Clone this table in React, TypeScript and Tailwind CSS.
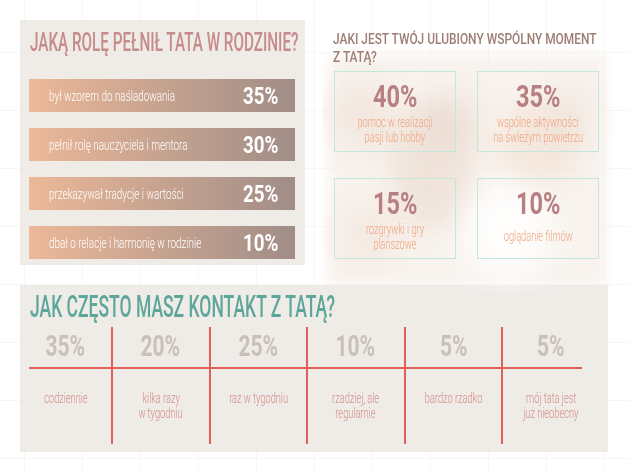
import React from "react";

const bars = [
  { label: "był wzorem do naśladowania", pct: "35%" },
  { label: "pełnił rolę nauczyciela i mentora", pct: "30%" },
  { label: "przekazywał tradycje i wartości", pct: "25%" },
  { label: "dbał o relacje i harmonię w rodzinie", pct: "10%" },
];

const moments = [
  { pct: "40%", lines: ["pomoc w realizacji", "pasji lub hobby"] },
  { pct: "35%", lines: ["wspólne aktywności", "na świeżym powietrzu"] },
  { pct: "15%", lines: ["rozgrywki i gry", "planszowe"] },
  { pct: "10%", lines: ["oglądanie filmów"] },
];

const freq = [
  { pct: "35%", lines: ["codziennie"] },
  { pct: "20%", lines: ["kilka razy", "w tygodniu"] },
  { pct: "25%", lines: ["raz w tygodniu"] },
  { pct: "10%", lines: ["rzadziej, ale", "regularnie"] },
  { pct: "5%", lines: ["bardzo rzadko"] },
  { pct: "5%", lines: ["mój tata jest", "już nieobecny"] },
];

function LeftPanel() {
  return (
    <div className="w-[285px] h-[245px] bg-[#efebe7] pt-[10px]">
      <div className="pl-[10px] h-[25px] text-[25px] leading-[25px] font-medium text-[#c68b8b]">
        <span className="inline-block whitespace-nowrap origin-left scale-x-[0.61]">
          JAKĄ ROLĘ PEŁNIŁ TATA W RODZINIE?
        </span>
      </div>
      <div className="mt-[24px] ml-[9px] w-[266px] flex flex-col gap-[16px]">
        {bars.map((b) => (
          <div
            key={b.label}
            className="h-[33px] flex items-center pl-[20px] pr-[17px] bg-[linear-gradient(to_right,#ecb898,#a08d87)]"
          >
            <div className="flex-1 min-w-0">
              <span className="inline-block whitespace-nowrap origin-left scale-x-[0.66] text-[15px] font-light text-white">
                {b.label}
              </span>
            </div>
            <span className="shrink-0 inline-block whitespace-nowrap origin-right scale-x-[0.78] text-[24px] leading-[24px] font-bold text-white">
              {b.pct}
            </span>
          </div>
        ))}
      </div>
    </div>
  );
}

function Photo() {
  return (
    <svg
      className="absolute left-[-3px] top-[25px]"
      width="292"
      height="248"
      viewBox="0 0 292 248"
    >
      <defs>
        <filter id="bl" x="-50%" y="-50%" width="200%" height="200%">
          <feGaussianBlur stdDeviation="14" />
        </filter>
        <filter id="bl2" x="-50%" y="-50%" width="200%" height="200%">
          <feGaussianBlur stdDeviation="6" />
        </filter>
      </defs>
      <rect x="6" y="10" width="278" height="230" fill="#f6eee7" opacity="0.7" filter="url(#bl2)" />
      <g filter="url(#bl)">
        <ellipse cx="40" cy="70" rx="35" ry="40" fill="#ecdcd0" opacity="0.45" />
        <ellipse cx="110" cy="120" rx="42" ry="65" fill="#e9d7cb" opacity="0.55" />
        <ellipse cx="130" cy="75" rx="30" ry="30" fill="#e6d6cc" opacity="0.45" />
        <ellipse cx="215" cy="100" rx="40" ry="45" fill="#f1dccc" opacity="0.5" />
        <ellipse cx="250" cy="75" rx="22" ry="40" fill="#ecdcd1" opacity="0.4" />
        <ellipse cx="185" cy="185" rx="45" ry="50" fill="#ffffff" opacity="0.85" />
        <ellipse cx="45" cy="190" rx="35" ry="35" fill="#f2e4da" opacity="0.5" />
      </g>
    </svg>
  );
}

function RightPanel() {
  return (
    <div className="relative ml-[20px] w-[287px] h-[245px] pl-[8px] pt-[10px]">
      <Photo />
      <div className="relative text-[15px] leading-[18px] font-medium text-[#9d7d74]">
        <span className="block whitespace-nowrap origin-left scale-x-[0.795]">
          JAKI JEST TWÓJ ULUBIONY WSPÓLNY MOMENT
        </span>
        <span className="block whitespace-nowrap origin-left scale-x-[0.795]">Z TATĄ?</span>
      </div>
      <div className="relative mt-[5px] ml-[1px] grid grid-cols-[122px_122px] gap-x-[21px] gap-y-[26px]">
        {moments.map((m) => (
          <div
            key={m.pct}
            className="h-[81px] border border-[#c4e6dd] flex flex-col items-center pt-[9px]"
          >
            <span className="inline-block whitespace-nowrap origin-center scale-x-[0.76] text-[31px] leading-[31px] font-bold text-[#b77f82]">
              {m.pct}
            </span>
            <div className="flex-1 flex flex-col items-center justify-center pb-[4px]">
              {m.lines.map((l) => (
                <span
                  key={l}
                  className="inline-block whitespace-nowrap origin-center scale-x-[0.66] text-[14px] leading-[15px] font-light text-[#f0a47f]"
                >
                  {l}
                </span>
              ))}
            </div>
          </div>
        ))}
      </div>
    </div>
  );
}

function BottomPanel() {
  return (
    <div className="mt-[20px] w-[588px] h-[167px] bg-[#efebe7] pt-[6px]">
      <div className="pl-[10px] h-[31px] text-[31px] leading-[31px] font-medium text-[#5da79a]">
        <span className="inline-block whitespace-nowrap origin-left scale-x-[0.565]">
          JAK CZĘSTO MASZ KONTAKT Z TATĄ?
        </span>
      </div>
      <div className="mt-[5px] grid grid-cols-[91px_repeat(5,97.5px)] h-[40px]">
        {freq.map((f, i) => (
          <div
            key={i}
            className={
              i === 0
                ? "flex justify-center pt-[4px]"
                : "flex justify-center pt-[4px] border-l-2 border-[#e2605b]"
            }
          >
            <span className="inline-block whitespace-nowrap origin-center scale-x-[0.7] text-[30px] leading-[30px] font-bold text-[#c9c0bb]">
              {f.pct}
            </span>
          </div>
        ))}
      </div>
      <div className="ml-[9px] w-[553px] h-[2px] bg-[#e2605b]" />
      <div className="grid grid-cols-[91px_repeat(5,97.5px)] h-[75px]">
        {freq.map((f, i) => (
          <div
            key={i}
            className={
              i === 0
                ? "flex flex-col items-center pt-[22px]"
                : "flex flex-col items-center pt-[22px] border-l-2 border-[#e2605b]"
            }
          >
            {f.lines.map((l) => (
              <span
                key={l}
                className="inline-block whitespace-nowrap origin-center scale-x-[0.66] text-[14px] leading-[15px] font-light text-[#d48f8b]"
              >
                {l}
              </span>
            ))}
          </div>
        ))}
      </div>
    </div>
  );
}

export default function App() {
  return (
    <div className="w-[629px] h-[472px] overflow-hidden bg-white [background-image:linear-gradient(to_right,#f6f6f6_1px,transparent_1px),linear-gradient(to_bottom,#f6f6f6_1px,transparent_1px)] [background-size:58px_58px] [background-position:24px_52px] font-['Roboto',sans-serif] px-[20px] pt-[20px]">
      <div className="flex">
        <LeftPanel />
        <RightPanel />
      </div>
      <BottomPanel />
    </div>
  );
}
